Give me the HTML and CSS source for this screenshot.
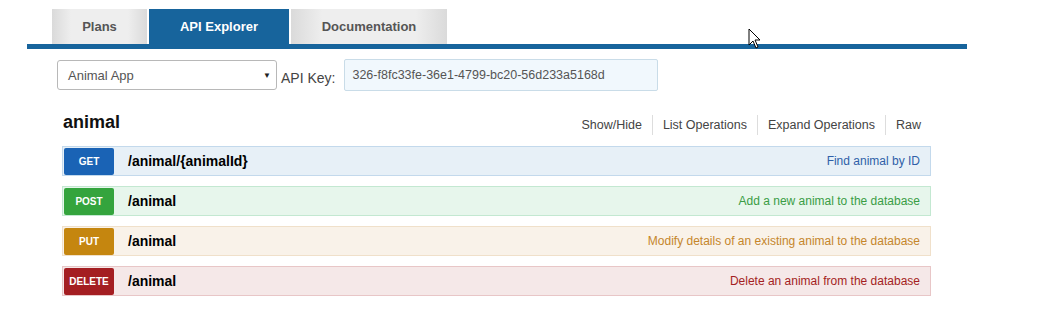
FILE: index.html
```html
<!DOCTYPE html>
<html>
<head>
    <title>API Explorer</title>
    <link rel="stylesheet" href="styles.css">
</head>
<body>
    <div class="page">
        <div class="tabs">
            <div class="tab">Plans</div>
            <div class="tab active">API Explorer</div>
            <div class="tab">Documentation</div>
        </div>
        <div class="tab-bar"></div>

        <div class="controls">
            <div class="select">
                <span>Animal App</span>
                <span class="caret">&#9660;</span>
            </div>
            <label class="key-label">API Key:</label>
            <div class="key-input">326-f8fc33fe-36e1-4799-bc20-56d233a5168d</div>
        </div>

        <div class="resource">
            <div class="resource-head">
                <h2>animal</h2>
                <ul class="options">
                    <li>Show/Hide</li>
                    <li>List Operations</li>
                    <li>Expand Operations</li>
                    <li>Raw</li>
                </ul>
            </div>

            <div class="op get">
                <span class="verb">GET</span>
                <span class="path">/animal/{animalId}</span>
                <span class="summary">Find animal by ID</span>
            </div>
            <div class="op post">
                <span class="verb">POST</span>
                <span class="path">/animal</span>
                <span class="summary">Add a new animal to the database</span>
            </div>
            <div class="op put">
                <span class="verb">PUT</span>
                <span class="path">/animal</span>
                <span class="summary">Modify details of an existing animal to the database</span>
            </div>
            <div class="op delete">
                <span class="verb">DELETE</span>
                <span class="path">/animal</span>
                <span class="summary">Delete an animal from the database</span>
            </div>
        </div>
    </div>

    <!-- mouse pointer caught in the screenshot -->
    <svg class="cursor" width="14" height="22" viewBox="0 0 14 22">
        <path d="M1 1 L1 17 L5 13 L8 20 L10 19 L7 12 L12 12 Z" fill="#fff" stroke="#000" stroke-width="1"/>
    </svg>
</body>
</html>
```

FILE: styles.css
```css
body {
    margin: 0;
    font-family: "Liberation Sans", Arial, sans-serif;
    background-color: #fff;
    position: relative;
}

.page {
    width: 940px;
    margin-left: 27px;
    padding-top: 9px;
}

.tabs {
    display: flex;
    gap: 2px;
    padding-left: 25px;
}

.tab {
    height: 35px;
    line-height: 35px;
    text-align: center;
    font-size: 13px;
    font-weight: bold;
    color: #555;
    background: linear-gradient(to right, #dadada, #eeeeee 20%, #eeeeee 80%, #dadada);
}

.tab:nth-child(1) {
    width: 95px;
}

.tab:nth-child(2) {
    width: 140px;
}

.tab:nth-child(3) {
    width: 156px;
}

.tab.active {
    background: #17649c;
    color: #fff;
}

.tab-bar {
    height: 5px;
    background-color: #17649c;
}

.controls {
    display: flex;
    align-items: center;
    margin: 10px 0 0 30px;
}

.select {
    box-sizing: border-box;
    width: 220px;
    height: 30px;
    border: 1px solid #b8b8b8;
    border-radius: 3px;
    display: flex;
    align-items: center;
    justify-content: space-between;
    padding: 0 5px 0 10px;
    font-size: 13px;
    color: #555;
}

.select .caret {
    font-size: 8px;
    color: #222;
}

.key-label {
    font-size: 14px;
    color: #444;
    margin: 5px 9px 0 4px;
}

.key-input {
    box-sizing: border-box;
    width: 314px;
    height: 32px;
    line-height: 30px;
    border: 1px solid #c9dce8;
    border-radius: 2px;
    background-color: #f1f8fd;
    padding-left: 7px;
    font-size: 12.5px;
    color: #555;
}

.resource {
    width: 869px;
    margin: 16px 0 0 35px;
}

.resource-head {
    display: flex;
    justify-content: space-between;
    align-items: center;
    height: 30px;
}

.resource-head h2 {
    margin: 1px 0 0 1px;
    font-size: 18px;
    font-weight: bold;
    color: #111;
}

.options {
    display: flex;
    list-style: none;
    margin: 6px 0 0 0;
    padding: 0;
}

.options li {
    font-size: 12.5px;
    color: #444;
    padding: 2px 10px;
    border-left: 1px solid #ddd;
    line-height: 16px;
}

.options li:first-child {
    border-left: none;
}

.options li:last-child {
    padding-right: 10px;
}

.op {
    box-sizing: border-box;
    height: 30px;
    margin-top: 10px;
    border: 1px solid;
    display: flex;
    align-items: center;
    padding-right: 10px;
}

.resource-head + .op {
    margin-top: 9px;
}

.verb {
    box-sizing: border-box;
    width: 50px;
    height: 27px;
    margin-left: 1px;
    border-radius: 2px;
    color: #fff;
    font-size: 10px;
    font-weight: bold;
    text-align: center;
    line-height: 27px;
}

.path {
    margin-left: 14px;
    font-size: 14px;
    font-weight: bold;
    color: #000;
}

.summary {
    margin-left: auto;
    font-size: 12px;
}

.get {
    background-color: #e7f0f7;
    border-color: #c3d9ec;
}

.get .verb {
    background-color: #1a63b5;
}

.get .summary {
    color: #2f5fa8;
}

.post {
    background-color: #e7f6ec;
    border-color: #c3e8d1;
}

.post .verb {
    background-color: #34a43d;
}

.post .summary {
    color: #3a9d45;
}

.put {
    background-color: #f9f2e9;
    border-color: #f0e0ca;
}

.put .verb {
    background-color: #c5860f;
}

.put .summary {
    color: #c5862b;
}

.delete {
    background-color: #f5e8e8;
    border-color: #e8c6c7;
}

.delete .verb {
    background-color: #a41e22;
}

.delete .summary {
    color: #a41e22;
}

.cursor {
    position: absolute;
    left: 748px;
    top: 28px;
}
```
